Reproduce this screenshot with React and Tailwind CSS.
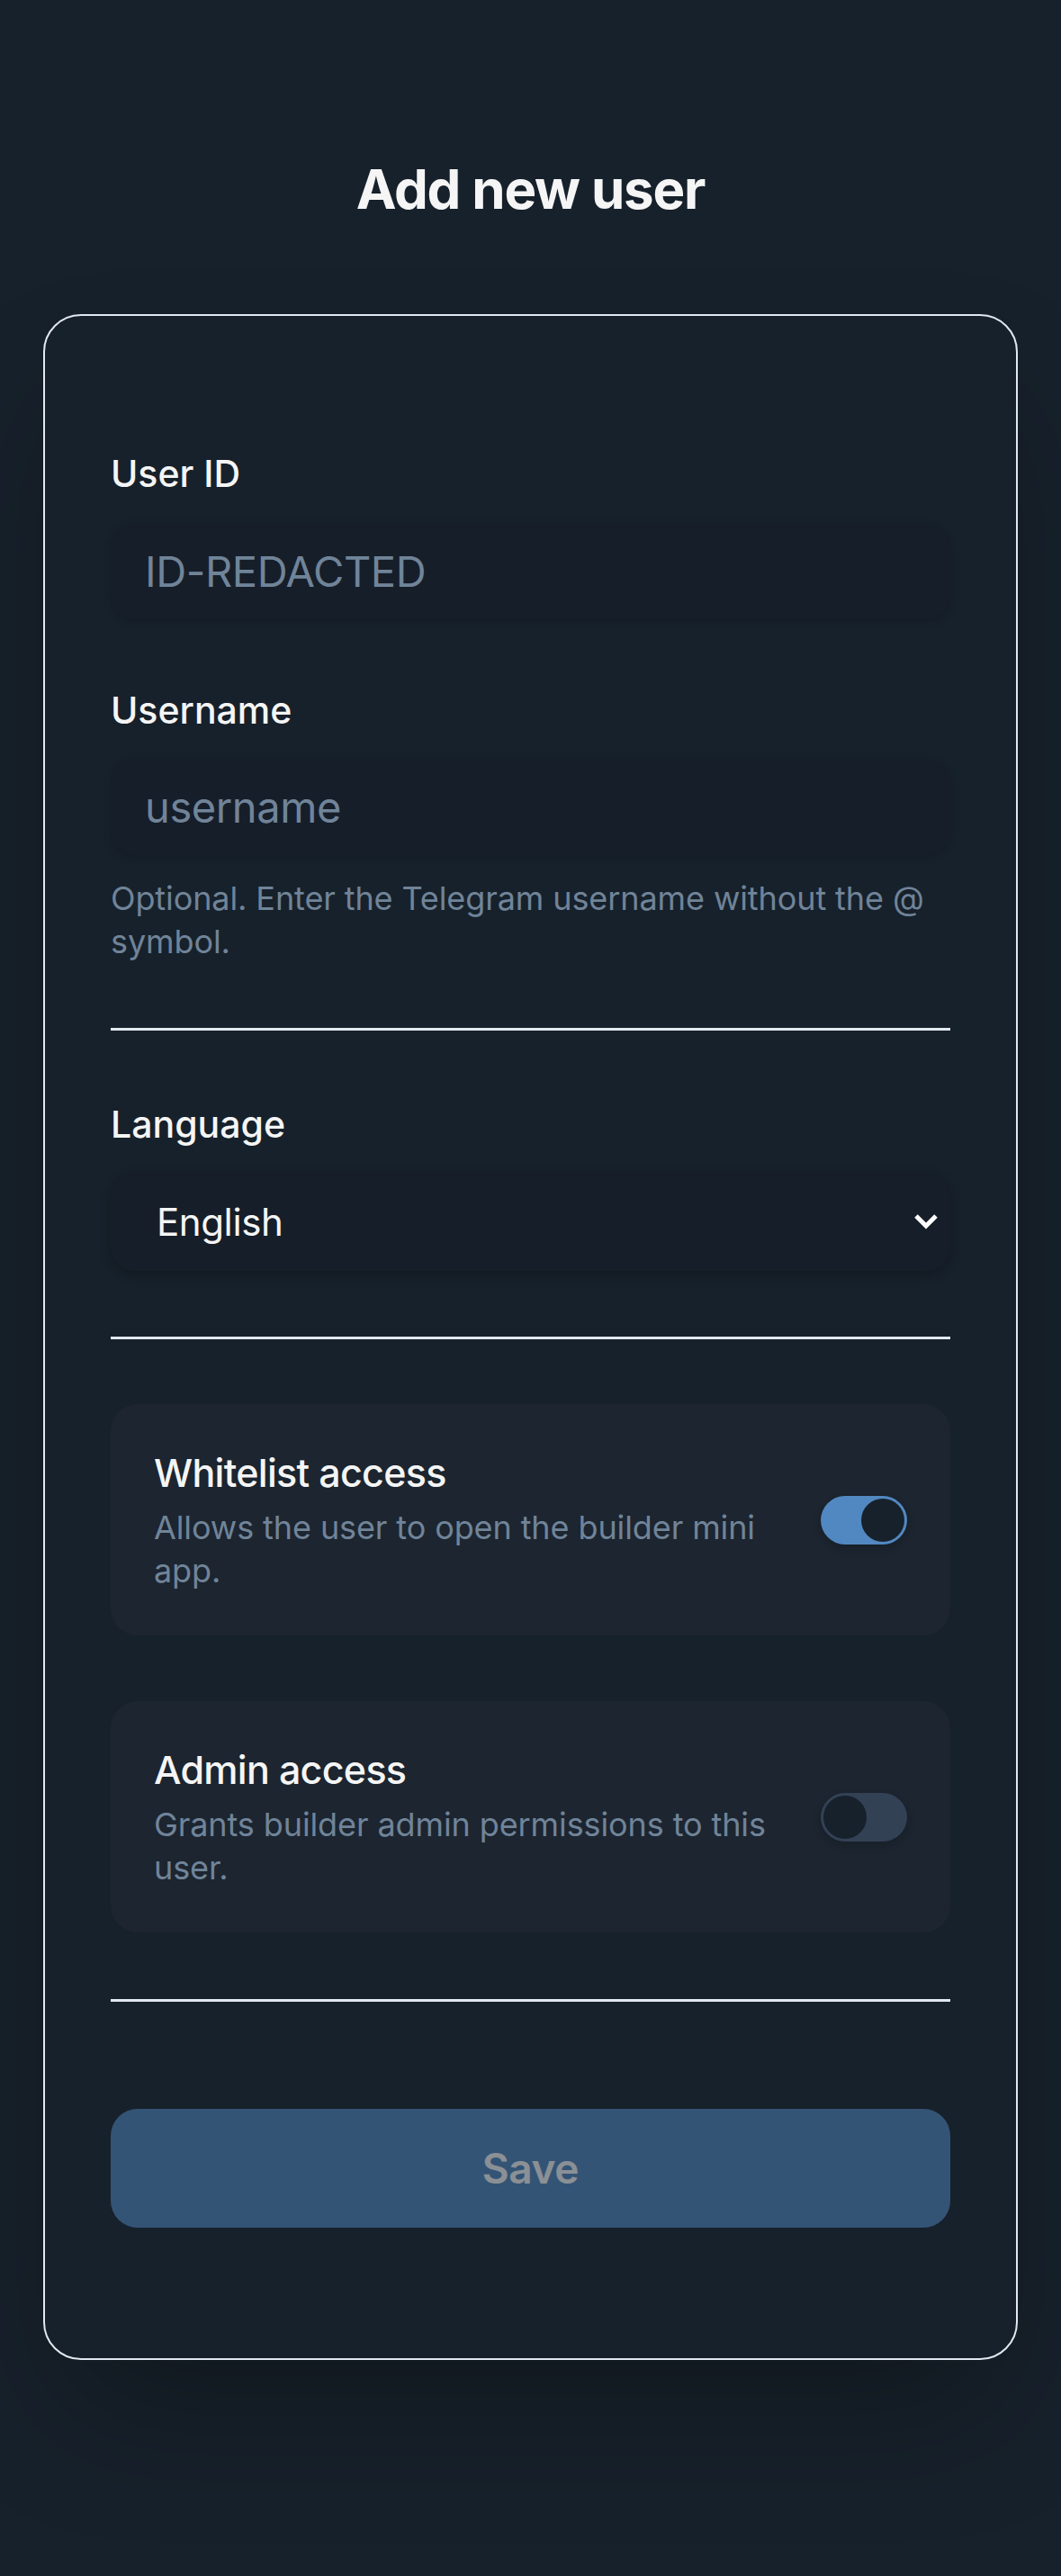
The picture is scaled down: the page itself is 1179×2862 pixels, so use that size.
import React from "react";

function Toggle({ on }) {
  return (
    <div
      className={
        on
          ? "flex h-[54px] w-[96px] shrink-0 items-center justify-end rounded-full bg-[#5288c1] p-[3px] shadow-[0_4px_10px_rgba(0,0,0,0.18)]"
          : "flex h-[54px] w-[96px] shrink-0 items-center justify-start rounded-full bg-[#334155] p-[3px] shadow-[0_4px_10px_rgba(0,0,0,0.18)]"
      }
    >
      <span className="block h-[48px] w-[48px] rounded-full bg-[#17212b]" />
    </div>
  );
}

function ToggleCard({ title, desc, on, className }) {
  return (
    <div
      className={
        "flex items-center justify-between gap-[48px] rounded-[30px] bg-[#1c2530] px-[48px] py-[48px] " +
        className
      }
    >
      <div className="min-w-0 flex-1">
        <div className="text-[43px] font-medium leading-[57px] tracking-[-0.7px] text-[#f5f5f5]">
          {title}
        </div>
        <div className="mt-[8px] text-[36px] leading-[48px] tracking-[-0.1px] text-[#708499]">
          {desc}
        </div>
      </div>
      <Toggle on={on} />
    </div>
  );
}

function Label({ children, className }) {
  return (
    <label
      className={
        "block text-[41px] font-medium leading-[48px] tracking-[0px] text-[#f5f5f5] " +
        className
      }
    >
      {children}
    </label>
  );
}

export default function App() {
  return (
    <div className="min-h-screen w-full bg-[#17212b] px-[48px] pb-[240px] pt-[174px] font-['Inter',sans-serif] text-[#f5f5f5]">
      <h1 className="text-center text-[60px] font-bold leading-[72px] tracking-[-1.2px] text-[#f5f5f5]">
        Add new user
      </h1>

      <div className="mt-[103px] rounded-[42px] border-2 border-[#e2e8f0] bg-[#17212b] px-[73px] pb-[145px] pt-[151px] shadow-[0_75px_150px_-36px_rgba(0,0,0,0.35)]">
        <Label className="">User ID</Label>
        <input
          readOnly
          placeholder="ID-REDACTED"
          className="mt-[31px] block h-[107px] w-full rounded-[27px] bg-[#161e29] pl-[38px] text-[47px] tracking-[-0.4px] text-[#f5f5f5] shadow-[0_3px_10px_rgba(0,0,0,0.12)] outline-none placeholder:text-[#708499]"
        />

        <Label className="mt-[77px]">Username</Label>
        <input
          readOnly
          placeholder="username"
          className="mt-[30px] block h-[107px] w-full rounded-[27px] bg-[#161e29] pl-[38px] text-[47px] tracking-[-0.4px] text-[#f5f5f5] shadow-[0_3px_10px_rgba(0,0,0,0.12)] outline-none placeholder:text-[#708499]"
        />
        <p className="mt-[24px] text-[36px] leading-[48px] tracking-[-0.1px] text-[#708499]">
          Optional. Enter the Telegram username without the @ symbol.
        </p>

        <div className="mt-[72px] h-[3px] w-full bg-[#e2e8f0]" />

        <Label className="mt-[80px]">Language</Label>
        <div className="mt-[29px] flex h-[110px] w-full items-center justify-between rounded-[27px] bg-[#161e29] pl-[51px] pr-[13px] shadow-[0_5px_12px_rgba(0,0,0,0.22)]">
          <span className="text-[42px] tracking-[-0.4px] text-[#f5f5f5]">English</span>
          <svg width="28" height="18" viewBox="0 0 28 18" fill="none">
            <polyline
              points="3,3 14,14 25,3"
              stroke="#ffffff"
              strokeWidth="5"
              strokeLinejoin="miter"
              strokeLinecap="butt"
            />
          </svg>
        </div>

        <div className="mt-[73px] h-[3px] w-full bg-[#e2e8f0]" />

        <ToggleCard
          className="mt-[72px]"
          title="Whitelist access"
          desc="Allows the user to open the builder mini app."
          on
        />
        <ToggleCard
          className="mt-[73px]"
          title="Admin access"
          desc="Grants builder admin permissions to this user."
          on={false}
        />

        <div className="mt-[74px] h-[3px] w-full bg-[#e2e8f0]" />

        <button className="mt-[119px] block h-[132px] w-full rounded-[30px] bg-[#5288c1] text-[46px] font-semibold tracking-[-0.4px] text-white opacity-50">
          Save
        </button>
      </div>
    </div>
  );
}
